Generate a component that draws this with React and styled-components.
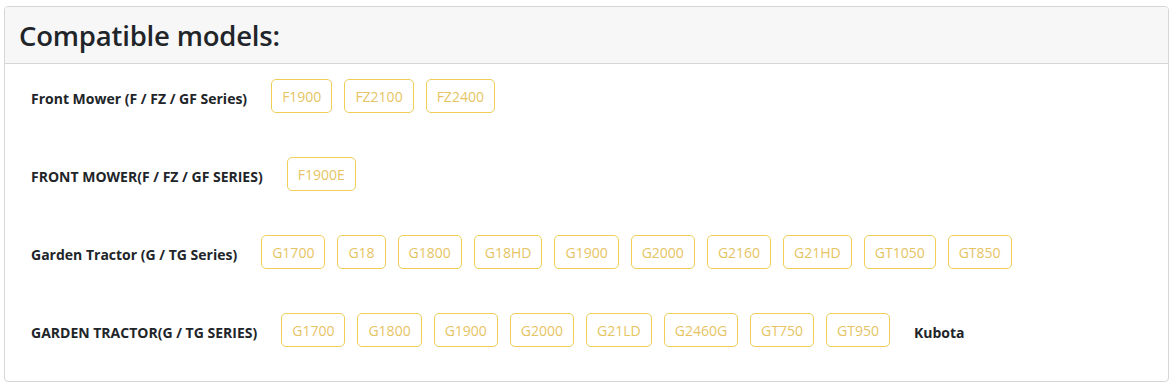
import React from 'react'
import styled, { createGlobalStyle } from 'styled-components'

const GlobalStyle = createGlobalStyle`
  body {
    margin: 0;
    background: #fff;
    font-family: 'Open Sans', 'Segoe UI', sans-serif;
  }
`

const groups = [
  { label: 'Front Mower (F / FZ / GF Series)', models: ['F1900', 'FZ2100', 'FZ2400'] },
  { label: 'FRONT MOWER(F / FZ / GF SERIES)', models: ['F1900E'] },
  {
    label: 'Garden Tractor (G / TG Series)',
    models: ['G1700', 'G18', 'G1800', 'G18HD', 'G1900', 'G2000', 'G2160', 'G21HD', 'GT1050', 'GT850'],
  },
  {
    label: 'GARDEN TRACTOR(G / TG SERIES)',
    models: ['G1700', 'G1800', 'G1900', 'G2000', 'G21LD', 'G2460G', 'GT750', 'GT950'],
    brand: 'Kubota',
  },
]

function App() {
  return (
    <Page>
      <GlobalStyle />
      <Card>
        <CardHeader>
          <Title>Compatible models:</Title>
        </CardHeader>
        <CardBody>
          {groups.map((g, i) => (
            <Row key={i}>
              <Label>{g.label}</Label>
              {g.models.map((m) => (
                <Chip key={m}>{m}</Chip>
              ))}
              {g.brand && <Brand>{g.brand}</Brand>}
            </Row>
          ))}
        </CardBody>
      </Card>
    </Page>
  )
}

const Page = styled.div`
  padding: 6px 7px 6px 4px;
`

const Card = styled.section`
  border: 1px solid #d6d6d6;
  border-radius: 4px;
  overflow: hidden;
`

const CardHeader = styled.header`
  height: 56px;
  display: flex;
  align-items: center;
  padding: 0 14px;
  background: #f7f7f7;
  border-bottom: 1px solid #d6d6d6;
`

const Title = styled.h2`
  margin: 0;
  font-size: 27.5px;
  font-weight: 600;
  color: #212529;
  letter-spacing: -0.2px;
`

const CardBody = styled.div`
  display: flex;
  flex-direction: column;
  gap: 44px;
  padding: 15px 26px 34px;
`

const Row = styled.div`
  display: flex;
  align-items: center;
  gap: 12px;
  height: 34px;
`

const Label = styled.span`
  margin: 4px 12px 0 0;
  font-size: 14px;
  font-weight: 700;
  color: #212529;
`

const Chip = styled.span`
  display: inline-flex;
  align-items: center;
  height: 34px;
  box-sizing: border-box;
  padding: 0 10px;
  border: 1px solid #efcd57;
  border-radius: 5px;
  font-size: 14px;
  color: #e6c463;
`

const Brand = styled(Label)`
  margin: 4px 0 0 12px;
`

export default App
